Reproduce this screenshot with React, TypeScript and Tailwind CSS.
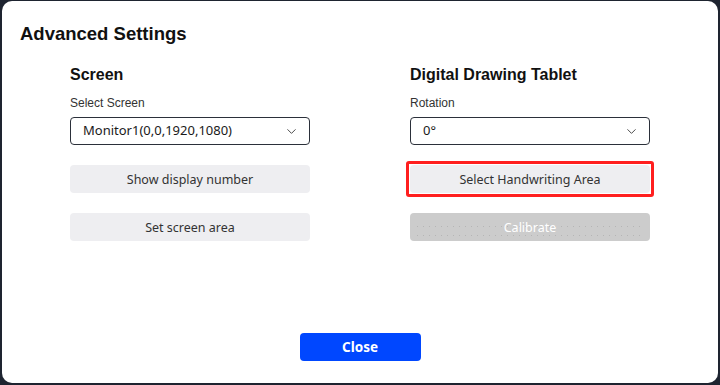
import { ChevronDown } from 'lucide-react';

function Select({ value }: { value: string }) {
    return (
        <div className="flex items-center justify-between h-[28px] rounded-[4px] border border-[#2b303a] pl-[12px] pr-[10px] text-[13px] text-[#1a1a1a]" style={{ fontFamily: "'Noto Sans', sans-serif" }}>
            <span>{value}</span>
            <ChevronDown size={15} strokeWidth={1.4} className="text-[#333]" />
        </div>
    );
}

function GrayButton({ label }: { label: string }) {
    return (
        <div className="flex items-center justify-center h-[28px] pt-[2px] rounded-[4px] bg-[#eeeef1] text-[12.5px] text-[#333]" style={{ fontFamily: "'Noto Sans', sans-serif" }}>
            {label}
        </div>
    );
}

export default function App() {
    const heading = "text-[16px] leading-[20px] font-bold text-[#111]";
    const label = "mt-[10px] text-[12px] leading-[16px] text-[#333]";
    const dotsX = "absolute h-px bg-[repeating-linear-gradient(90deg,#b5b5b5_0_1px,transparent_1px_6px)]";
    return (
        <div className="w-[720px] h-[385px] bg-[#1e2430] pt-px px-[2px] pb-[2px]" style={{ fontFamily: "'Liberation Sans', Arial, sans-serif" }}>
            <div className="h-full bg-white rounded-[10px] flex flex-col">
                {/* Title */}
                <h1 className="pt-[21px] pl-[18px] text-[18.5px] leading-[24px] font-bold text-[#111]">Advanced Settings</h1>

                {/* Columns */}
                <div className="mt-[19px] px-[68px] grid grid-cols-[240px_240px] gap-x-[100px]">
                    <div className="flex flex-col">
                        <h2 className={heading}>Screen</h2>
                        <p className={label}>Select Screen</p>
                        <div className="mt-[6px]"><Select value="Monitor1(0,0,1920,1080)" /></div>
                        <div className="mt-[20px]"><GrayButton label="Show display number" /></div>
                        <div className="mt-[20px]"><GrayButton label="Set screen area" /></div>
                    </div>
                    <div className="flex flex-col">
                        <h2 className={heading}>Digital Drawing Tablet</h2>
                        <p className={label}>Rotation</p>
                        <div className="mt-[6px]"><Select value="0°" /></div>
                        <div className="mt-[16px] -mx-[4px] p-px border-[3px] border-[#ff1f1f] rounded-[3px]">
                            <GrayButton label="Select Handwriting Area" />
                        </div>
                        <div className="mt-[16px] relative flex items-center justify-center h-[28px] pt-[2px] rounded-[4px] bg-[#cccccc] text-[12.5px] text-white" style={{ fontFamily: "'Noto Sans', sans-serif" }}>
                            <div className={`${dotsX} left-[7px] right-[6px] top-[13px]`} />
                            <div className={`${dotsX} left-[7px] right-[6px] top-[22px]`} />
                            <span className="relative">Calibrate</span>
                        </div>
                    </div>
                </div>

                {/* Footer */}
                <div className="mt-auto mb-[22px] flex justify-center">
                    <button className="w-[121px] h-[28px] pt-px rounded-[4px] bg-[#0047ff] text-white text-[13.5px] font-bold" style={{ fontFamily: "'Noto Sans', sans-serif" }}>Close</button>
                </div>
            </div>
        </div>
    );
}
